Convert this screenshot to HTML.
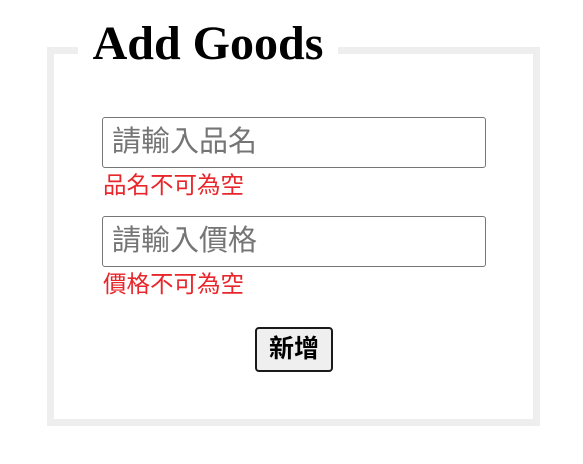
<!DOCTYPE html>
<html><head><meta charset="utf-8"><style>
body{margin:0;width:583px;height:464px;background:#fff;position:relative;overflow:hidden;font-family:"Liberation Sans","Noto Sans CJK TC",sans-serif}
.fs{position:absolute;left:47px;top:47px;width:479px;height:365px;border:7px solid #eeeeee}
.lg{position:absolute;left:78px;top:14px;width:260px;height:60px;background:#fff;text-align:center;font:bold 48px "Liberation Serif",serif;line-height:60px;color:#000}
.in{position:absolute;left:102px;border:1px solid #767676;border-radius:3px;font-size:29px;color:#757575;line-height:49px;padding-left:9px;box-sizing:border-box;width:384px;height:51px}
.err{position:absolute;left:103px;font-size:23.5px;color:#e8262b;line-height:26px}
.bt{position:absolute;left:255px;top:327px;width:78px;height:45px;box-sizing:border-box;border:2px solid #1a1a1a;border-radius:4px;background:#efefef;font-size:25px;font-weight:bold;text-align:center;line-height:41px;color:#000}
</style></head><body>
<div class="fs"></div>
<div class="lg">Add Goods</div>
<div class="in" style="top:117px">請輸入品名</div>
<div class="err" style="top:172px">品名不可為空</div>
<div class="in" style="top:216px">請輸入價格</div>
<div class="err" style="top:271px">價格不可為空</div>
<div class="bt">新增</div>
</body></html>
